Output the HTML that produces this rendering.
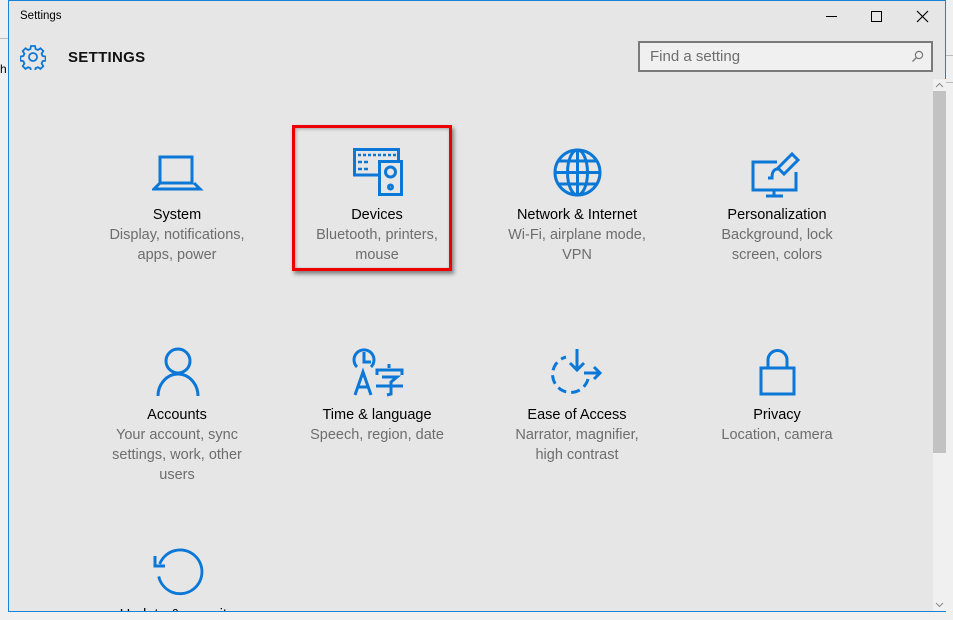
<!DOCTYPE html>
<html><head><meta charset="utf-8"><style>
*{margin:0;padding:0;box-sizing:border-box}
body{width:953px;height:620px;background:#f0f0f0;font-family:"Liberation Sans",sans-serif;position:relative;overflow:hidden}
.win{position:absolute;left:8px;top:0;width:938px;height:612px;background:#e6e6e6;border:1px solid #1883d7;border-right-width:1px}
.t{position:absolute;font-size:11.5px;color:#000}
.item{position:absolute;width:170px;text-align:center;font-size:14.5px;line-height:20px}
.item .n{color:#000}
.item .d{color:#6d6d6d}
svg{position:absolute}
.ic{stroke:#0b78d7;fill:none;stroke-width:3}
</style></head><body>
<div style="position:absolute;left:0;top:38px;width:8px;height:1px;background:#bbb"></div>
<div style="position:absolute;left:0;top:62px;width:8px;height:16px;font-size:12px;color:#000">h</div>
<div style="position:absolute;left:946px;top:55px;width:7px;height:1px;background:#bbb"></div>
<div style="position:absolute;left:946px;top:82px;width:7px;height:1px;background:#bbb"></div>
<div class="win">
<div class="t" style="left:11px;top:9px">Settings</div>
<div style="position:absolute;left:817px;top:15px;width:11px;height:1px;background:#000"></div>
<div style="position:absolute;left:862px;top:10px;width:11px;height:11px;border:1px solid #000"></div>
<svg style="left:907px;top:9px" width="13" height="13"><path d="M1 1L12 12M12 1L1 12" stroke="#000" stroke-width="1.2"/></svg>
<svg style="left:11px;top:43px" width="26" height="26" viewBox="0 0 26 26"><path class="ic" style="stroke-width:1.8" d="M11 2h4l.6 3 2.3 1 2.6-1.7 2.8 2.8-1.7 2.6 1 2.3 3 .6v4l-3 .6-1 2.3 1.7 2.6-2.8 2.8-2.6-1.7-2.3 1-.6 3h-4l-.6-3-2.3-1-2.6 1.7-2.8-2.8 1.7-2.6-1-2.3-3-.6v-4l3-.6 1-2.3-1.7-2.6 2.8-2.8 2.6 1.7 2.3-1z"/><circle class="ic" style="stroke-width:1.8" cx="13" cy="13" r="4"/></svg>
<div style="position:absolute;left:59px;top:48px;font-size:15px;font-weight:bold;color:#111;letter-spacing:.3px">SETTINGS</div>
<div style="position:absolute;left:629px;top:40px;width:295px;height:31px;border:2px solid #7a7a7a;background:#f0f0f0"></div>
<div style="position:absolute;left:641px;top:47px;font-size:15px;color:#6d6d6d">Find a setting</div>
<svg style="left:902px;top:49px" width="13" height="13"><circle cx="8" cy="5" r="3.6" stroke="#777" fill="none" stroke-width="1.2"/><path d="M5.5 7.5L1.5 11.5" stroke="#777" stroke-width="1.3"/></svg>
<div style="position:absolute;left:924px;top:78px;width:13px;height:533px;background:#f0f0f0"></div>
<div style="position:absolute;left:924px;top:90px;width:13px;height:362px;background:#c2c2c2"></div>
<svg style="left:926px;top:81px" width="9" height="6"><path d="M1 5L4.5 1.5L8 5" stroke="#888" fill="none"/></svg>
<svg style="left:926px;top:601px" width="9" height="6"><path d="M1 1L4.5 4.5L8 1" stroke="#888" fill="none"/></svg>
</div>

<!-- Row 1 icons -->
<svg style="left:152px;top:155px" width="52" height="36"><path class="ic" d="M8 2h32v26H8zM8 28L2 34h46l-6-6"/></svg>
<svg style="left:352px;top:147px" width="52" height="50"><path class="ic" d="M26 28H2.5V2.5h44V13" stroke-width="2.5"/><path d="M6 8h3M11 8h3M16 8h3M21 8h3M26 8h3M31 8h3M36 8h3M41 8h3M6 15h4M12 15h4M6 22h4M12 22h4" stroke="#0b78d7" stroke-width="2.5"/><path class="ic" d="M27.5 14.5h22v33h-22z" stroke-width="2.5"/><circle class="ic" cx="38.5" cy="25" r="5" stroke-width="2.5"/><circle class="ic" cx="38.5" cy="40" r="2" stroke-width="2.5"/></svg>
<svg style="left:553px;top:148px" width="50" height="50"><circle class="ic" cx="24.5" cy="24.5" r="22.5"/><ellipse class="ic" cx="24.5" cy="24.5" rx="10" ry="22.5"/><path class="ic" d="M24.5 2v45M2 24.5h45M6 13h37M6 36h37"/></svg>
<svg style="left:750px;top:152px" width="52" height="46"><path class="ic" d="M27 10H3v28h43V20M24 38v6M16 44h17"/><path class="ic" d="M42 2l6 6-14 14-6-6z" stroke-width="2.5"/><path class="ic" d="M28 17c-5 0-6 4-6 9h-4" stroke-width="2.5"/></svg>

<div class="item" style="left:92px;top:205px"><div class="n">System</div><div class="d">Display, notifications,<br>apps, power</div></div>
<div class="item" style="left:292px;top:205px"><div class="n">Devices</div><div class="d">Bluetooth, printers,<br>mouse</div></div>
<div class="item" style="left:492px;top:205px"><div class="n">Network &amp; Internet</div><div class="d">Wi-Fi, airplane mode,<br>VPN</div></div>
<div class="item" style="left:692px;top:205px"><div class="n">Personalization</div><div class="d">Background, lock<br>screen, colors</div></div>

<div style="position:absolute;left:292px;top:125px;width:160px;height:146px;border:3px solid #ee0000;box-shadow:2px 3px 4px rgba(0,0,0,.45), inset 1px 1px 3px rgba(0,0,0,.3)"></div>

<!-- Row 2 icons -->
<svg style="left:155px;top:347px" width="46" height="50"><circle class="ic" cx="23" cy="14" r="12"/><path class="ic" d="M3 49c0-12 9-22 20-22s20 10 20 22"/></svg>
<svg style="left:352px;top:347px" width="54" height="50"><path class="ic" d="M5 20A10 10 0 1 1 19 20" stroke-width="2.5"/><path class="ic" d="M12 5v10h7" stroke-width="2.5"/><path class="ic" d="M3 48l8-23 8 23M6 40h10" stroke-width="2.5"/><path class="ic" d="M37 17v4M25 28v-5h25v5M30 30h15l-6 5v12l-4 1M24 39h27" stroke-width="2.5"/></svg>
<svg style="left:550px;top:347px" width="54" height="50"><path class="ic" d="M27 2v20M20 16l7 7 7-7" stroke-width="2.5"/><path class="ic" d="M34 26h16M44 20l6 6-6 6" stroke-width="2.5"/><path class="ic" d="M38 32A18 18 0 1 1 16 10" stroke-dasharray="9 5" stroke-width="2.5"/></svg>
<svg style="left:759px;top:347px" width="38" height="50"><path class="ic" d="M9 21V13a9.5 9.5 0 0 1 19 0v8M2 21h33v26H2z"/></svg>

<div class="item" style="left:92px;top:405px"><div class="n">Accounts</div><div class="d">Your account, sync<br>settings, work, other<br>users</div></div>
<div class="item" style="left:292px;top:405px"><div class="n">Time &amp; language</div><div class="d">Speech, region, date</div></div>
<div class="item" style="left:492px;top:405px"><div class="n">Ease of Access</div><div class="d">Narrator, magnifier,<br>high contrast</div></div>
<div class="item" style="left:692px;top:405px"><div class="n">Privacy</div><div class="d">Location, camera</div></div>

<svg style="left:152px;top:546px" width="52" height="52"><path class="ic" d="M6 19A23 23 0 1 1 5 32" transform="translate(2 0) scale(.95)"/><path class="ic" d="M3 10v10h10" stroke-width="3"/></svg>
<div class="item" style="left:92px;top:605px;height:6px;overflow:hidden"><div class="n">Update &amp; security</div></div>
<div style="position:absolute;left:8px;top:611px;width:938px;height:1px;background:#1883d7"></div>
</body></html>
